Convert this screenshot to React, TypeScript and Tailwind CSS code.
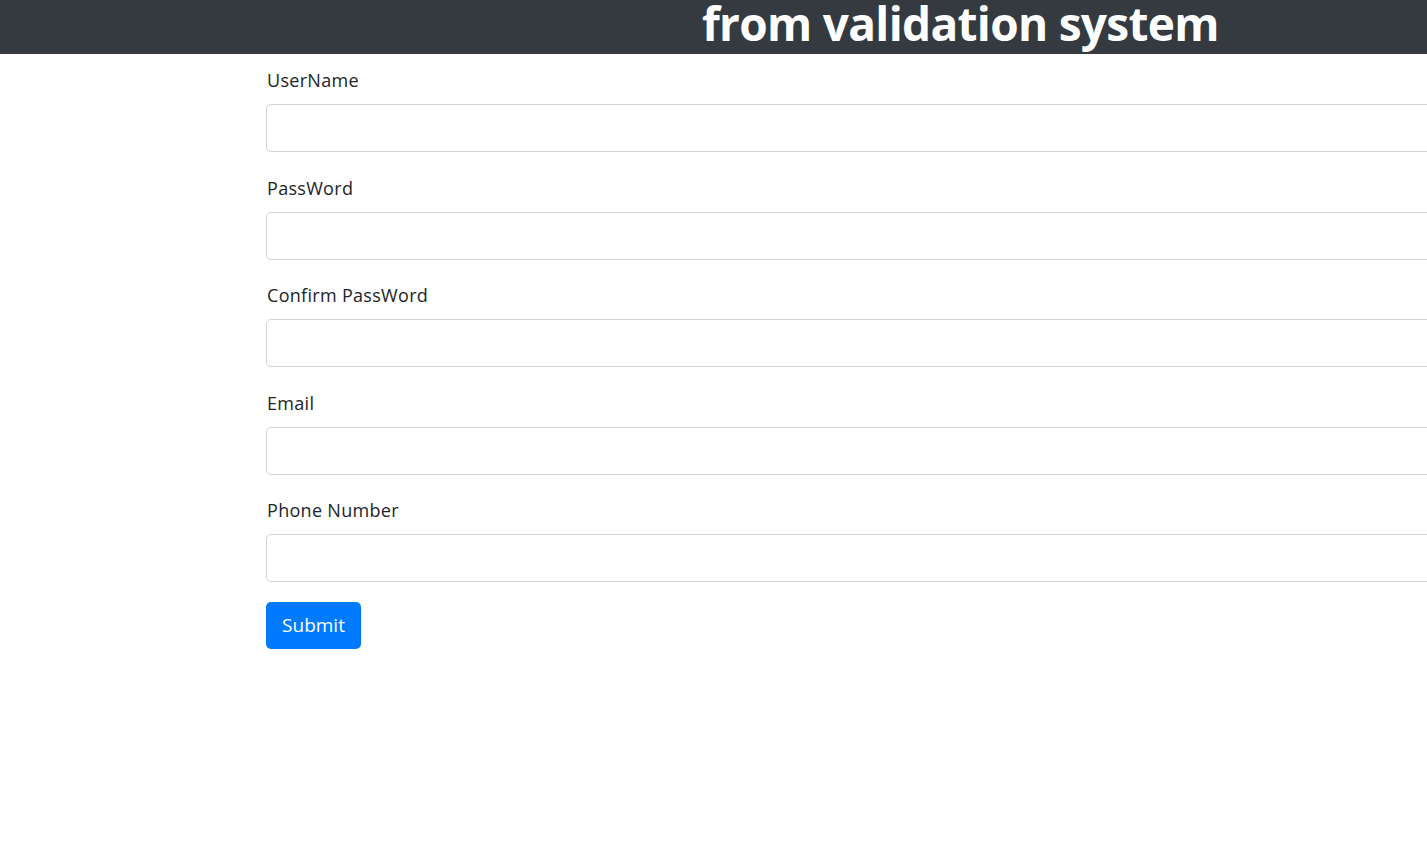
import React from "react";

const fields = ["UserName", "PassWord", "Confirm PassWord", "Email", "Phone Number"];

export default function App() {
  return (
    <div
      className="w-[1427px] h-[842px] overflow-hidden bg-white text-[#212529]"
      style={{ fontFamily: '"Open Sans", "Noto Sans", sans-serif' }}
    >
      <header className="h-[54px] bg-[#343a40] overflow-hidden flex items-start pl-[702px]">
        <h1 className="text-white font-bold text-[46px] leading-[54px] -mt-[4px] whitespace-nowrap tracking-[-0.7px]">
          from validation system
        </h1>
      </header>
      <form className="pl-[266px] pt-[14px] flex flex-col">
        {fields.map((f) => (
          <div key={f} className="flex flex-col mb-[23.5px]">
            <label className="text-[18px] leading-[24px] mb-[12px] whitespace-nowrap pl-[1px] tracking-[0.3px]">{f}</label>
            <input
              type="text"
              className="w-[1300px] h-[48px] border border-[#ced4da] rounded-[5px] px-4 outline-none"
            />
          </div>
        ))}
        <div className="-mt-[4px]">
          <button
            type="button"
            className="h-[47px] w-[95px] bg-[#007bff] text-white text-[19px] rounded-[5px] leading-none"
          >
            Submit
          </button>
        </div>
      </form>
    </div>
  );
}
